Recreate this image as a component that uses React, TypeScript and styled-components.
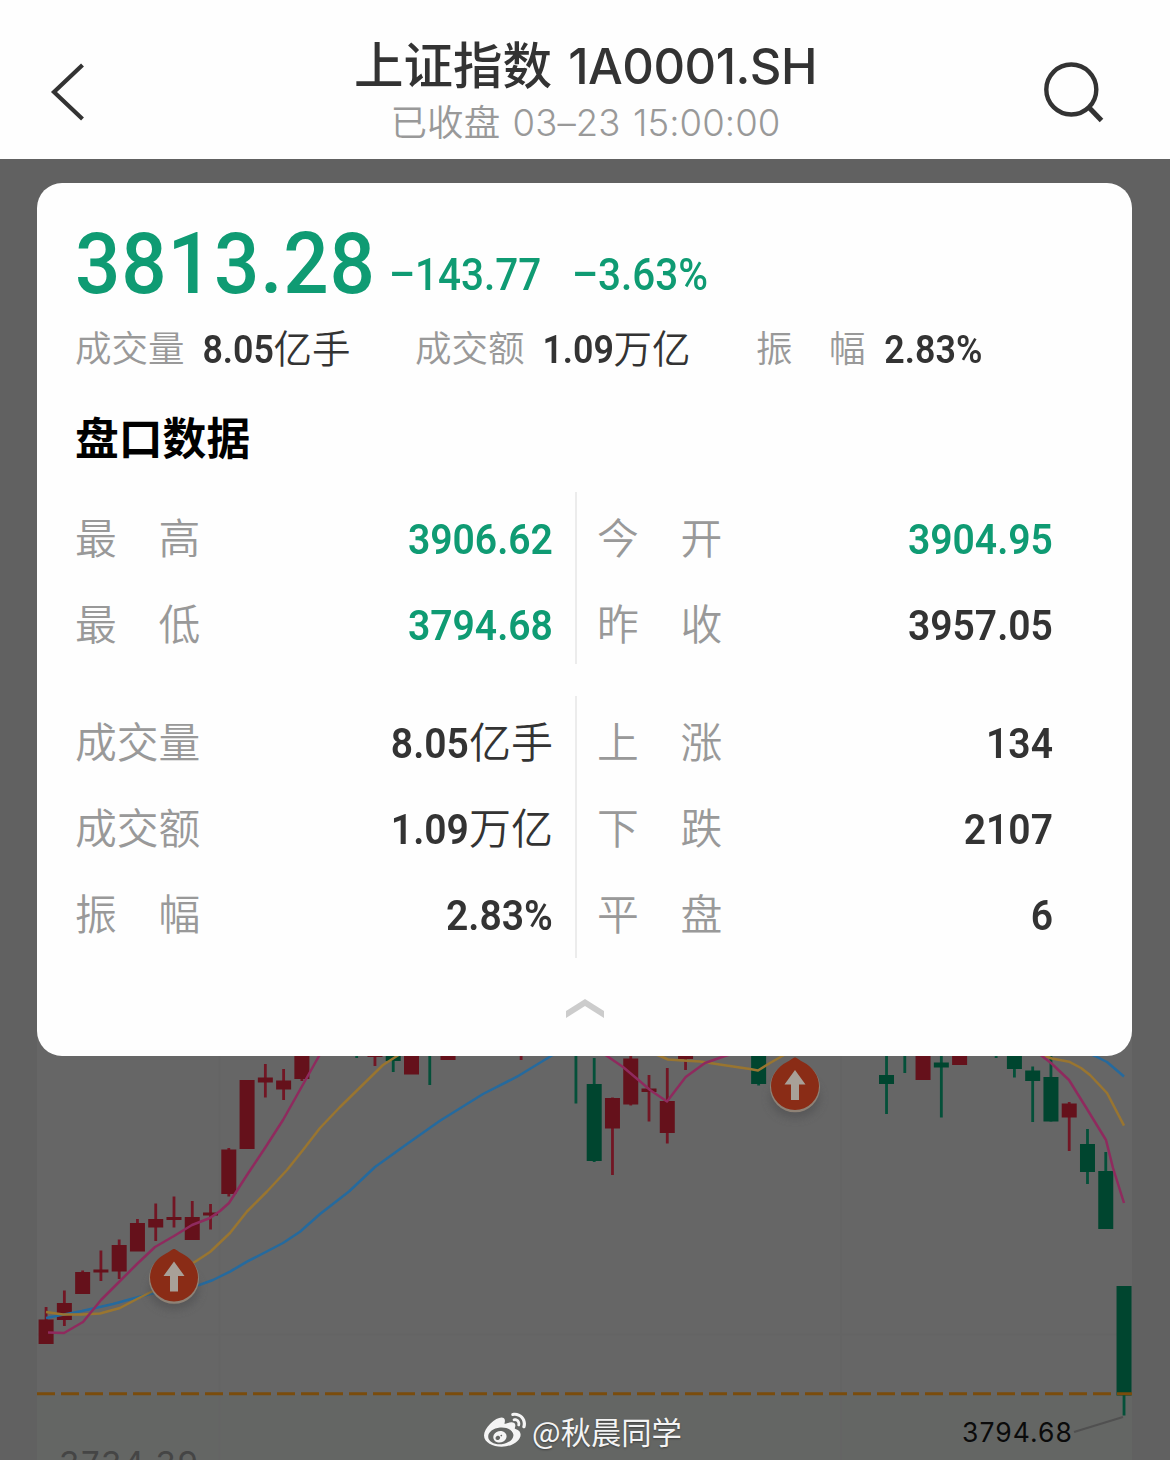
import React from "react";
import styled, { createGlobalStyle } from "styled-components";
import { FaWeibo } from "react-icons/fa";

const GREEN = "#0f9b73";
const INK = "#333333";
const MUTED = "#999999";

const GlobalStyle = createGlobalStyle`
  * { box-sizing: border-box; }
  body {
    margin: 0;
    background: #616161;
    font-family: Inter, "Noto Sans CJK SC", sans-serif;
  }
`;

const Screen = styled.div`
  position: relative;
  width: 1170px;
  height: 1460px;
  overflow: hidden;
  display: flex;
  flex-direction: column;
  background: #616161;
`;

const Header = styled.header`
  flex: none;
  height: 159px;
  padding: 36px 64px 0 49px;
  display: flex;
  justify-content: space-between;
  background: #fefefe;
`;

const HeaderIcon = styled.svg`
  display: block;
  flex: none;
  width: 64px;
  height: 64px;
  margin-top: 24px;
  fill: none;
  stroke: ${INK};
`;

const Titles = styled.div`
  display: flex;
  flex-direction: column;
  align-items: center;
  margin-left: 16px;
  white-space: nowrap;
`;

const Title = styled.h1`
  margin: 0;
  height: 60px;
  line-height: 60px;
  font-size: 49.5px;
  font-weight: 500;
  color: ${INK};
`;

const Code = styled.span`
  margin-left: 3px;
  font-size: 49px;
  font-weight: 550;
  letter-spacing: -0.5px;
`;

const Subtitle = styled.div`
  height: 54px;
  line-height: 54px;
  font-size: 36.5px;
  font-weight: 350;
  letter-spacing: 0.1px;
  word-spacing: 2px;
  color: ${MUTED};
`;

const Card = styled.section`
  position: relative;
  z-index: 1;
  flex: none;
  height: 873px;
  margin: 24px 38px 0 37px;
  padding: 40px 79px 0 38px;
  border-radius: 25px;
  background: #fefefe;
  display: flex;
  flex-direction: column;
`;

/* Figures are set slightly narrow, in the manner of a DIN face. */
const NARROW = "scaleX(0.93)";

const PriceLine = styled.div`
  height: 80px;
  display: flex;
  align-items: flex-start;
  font-family: Roboto, sans-serif;
  font-weight: 500;
  color: ${GREEN};
  white-space: nowrap;
`;

const Price = styled.span`
  width: 314px;
  line-height: 81px;
  font-size: 86px;
  letter-spacing: 0.9px;
  transform: ${NARROW};
  transform-origin: left;
`;

const Change = styled.span<{ $width: number }>`
  width: ${(p) => p.$width}px;
  line-height: 106px;
  font-size: 43.5px;
  transform: ${NARROW};
  transform-origin: left;
`;

const SummaryLine = styled.div`
  height: 54px;
  margin-top: 19px;
  display: flex;
  line-height: 55px;
  white-space: nowrap;
`;

const SummaryItem = styled.div<{ $width: number; $gap: number }>`
  width: ${(p) => p.$width}px;
  display: flex;
  gap: ${(p) => p.$gap}px;
`;

const Label = styled.span<{ $size: number; $line: number }>`
  font-family: "Noto Sans CJK SC", sans-serif;
  font-size: ${(p) => p.$size}px;
  line-height: ${(p) => p.$line}px;
  font-weight: 350;
  color: ${MUTED};
`;

const Value = styled.span<{ $size: number; $down?: boolean }>`
  font-size: ${(p) => p.$size}px;
  color: ${(p) => (p.$down ? GREEN : INK)};
`;

const Digits = styled.span`
  display: inline-block;
  font-family: Roboto, sans-serif;
  font-weight: 600;
  transform: ${NARROW};
  transform-origin: right;
`;

const Unit = styled.span<{ $size: number }>`
  font-family: "Noto Sans CJK SC", sans-serif;
  font-size: ${(p) => p.$size}px;
  font-weight: 350;
  line-height: 0;
`;

const SectionTitle = styled.h2`
  margin: 34px 0 0;
  height: 60px;
  line-height: 52px;
  font-family: "Noto Sans CJK SC", sans-serif;
  font-size: 43.8px;
  font-weight: 600;
  color: #000;
`;

const Group = styled.div<{ $top: number; $height: number }>`
  margin-top: ${(p) => p.$top}px;
  height: ${(p) => p.$height}px;
  display: grid;
  grid-template-columns: 502px 1fr;
  grid-template-rows: 100%;
`;

const Column = styled.div<{ $divided?: boolean }>`
  display: flex;
  flex-direction: column;
  padding: 4px 0 0;
  ${(p) => (p.$divided ? "border-right: 2px solid #ececec; padding-right: 22px;" : "padding-left: 20px;")}
`;

const Row = styled.div`
  flex: none;
  height: 86px;
  display: flex;
  justify-content: space-between;
  line-height: 86px;
  white-space: nowrap;
`;

const Collapse = styled.svg`
  display: block;
  width: 40px;
  height: 20px;
  margin: 41px 0 0 490px;
`;

const Chart = styled.svg`
  display: block;
  flex: none;
  width: 1170px;
  height: 440px;
  margin-top: -36px;
`;

const Watermark = styled.div`
  position: absolute;
  left: 484px;
  top: 1408px;
  height: 46px;
  display: flex;
  align-items: center;
  gap: 6px;
  font-family: "Noto Sans CJK SC", sans-serif;
  font-size: 30.3px;
  line-height: 46px;
  color: #f4f4f4;
  white-space: nowrap;
  text-shadow: 0 1px 2px rgba(0, 0, 0, 0.4);
`;

function Quote({ text, size, down }: { text: string; size: number; down?: boolean }) {
  const parts = text.match(/^([\d.%]+)(.*)$/)!;
  return (
    <Value $size={size} $down={down}>
      <Digits>{parts[1]}</Digits>
      {parts[2] && <Unit $size={size}>{parts[2]}</Unit>}
    </Value>
  );
}

type Entry = [label: string, value: string, down?: boolean];

function Entries({ items, divided }: { items: Entry[]; divided?: boolean }) {
  return (
    <Column $divided={divided}>
      {items.map(([label, value, down]) => (
        <Row key={label}>
          <Label $size={41.8} $line={80}>{label}</Label>
          <Quote text={value} size={42} down={down} />
        </Row>
      ))}
    </Column>
  );
}

/* [slot, rising, body top, body bottom, wick top, wick bottom] */
const CANDLES: [number, boolean, number, number, number, number][] = [
  [0, true, 1319.5, 1344, 1307, 1344],
  [1, true, 1303, 1320, 1290.5, 1326],
  [2, true, 1272, 1294, 1270.5, 1294],
  [3, true, 1269.5, 1272.5, 1250.5, 1281],
  [4, true, 1245, 1271.5, 1239.5, 1279],
  [5, true, 1223, 1251.5, 1219, 1251],
  [6, true, 1219, 1227.5, 1203.5, 1241],
  [7, true, 1217, 1220, 1196.5, 1227.5],
  [8, true, 1217, 1240, 1201, 1240],
  [9, true, 1212.5, 1215.5, 1204, 1229.5],
  [10, true, 1149.5, 1194, 1148, 1196.5],
  [11, true, 1080, 1149, 1080, 1149],
  [12, true, 1077.5, 1082.5, 1064, 1097.5],
  [13, true, 1080.5, 1089.5, 1069, 1100],
  [14, true, 1040, 1079, 1040, 1081],
  [17, false, 1040, 1050, 1040, 1058],
  [18, true, 1040, 1057, 1040, 1066],
  [19, false, 1040, 1061, 1040, 1072],
  [20, true, 1040, 1074.5, 1040, 1074],
  [21, false, 1040, 1050, 1040, 1085],
  [22, true, 1040, 1060, 1040, 1060],
  [26, true, 1040, 1050, 1040, 1060],
  [29, false, 1040, 1050, 1040, 1103.5],
  [30, false, 1084, 1161, 1058, 1162],
  [31, true, 1098, 1128.5, 1097.5, 1175],
  [32, true, 1058.5, 1104.5, 1040, 1105.5],
  [33, true, 1088.5, 1092, 1075, 1121.5],
  [34, true, 1101, 1133, 1068, 1143.5],
  [35, true, 1040, 1059, 1040, 1070],
  [39, false, 1040, 1084, 1040, 1085.5],
  [46, false, 1075, 1084, 1040, 1114],
  [47, false, 1040, 1050, 1040, 1073],
  [48, true, 1040, 1080, 1040, 1080],
  [49, false, 1062.5, 1067.5, 1040, 1117.5],
  [50, true, 1040, 1065, 1040, 1065],
  [52, false, 1040, 1050, 1040, 1058],
  [53, false, 1040, 1069, 1040, 1077.5],
  [54, false, 1070.5, 1081, 1066.5, 1122],
  [55, false, 1077, 1121.5, 1040, 1121.5],
  [56, true, 1103.5, 1117.5, 1102, 1151],
  [57, false, 1144, 1172, 1129, 1184],
  [58, false, 1171, 1229, 1152, 1229],
  [59, false, 1286, 1395.5, 1286, 1415.5],
];

const BLUE = "#256a9e";
const AMBER = "#997530";
const PINK = "#8f2a5e";

const AVERAGES: { color: string; points: string }[] = [
  { color: BLUE, points: "46,1318 64,1314.5 82,1311 113,1304 133,1298.5 150,1294 175,1290 200,1284.7 213,1280 230,1271.7 247,1261.7 283,1243 300,1231.7 320,1214 349,1191.5 375,1167 407,1144 440,1120.7 483,1094 517,1076.7 551,1056 565,1047" },
  { color: BLUE, points: "1080,1049 1095,1056 1107,1062 1124,1076.5" },
  { color: AMBER, points: "46,1312 63,1314.5 82,1314.5 100,1313.5 120,1308 137,1299 155,1290 180,1271 197,1260.5 210,1252 230,1233 247,1211.5 267,1191.5 287,1170 303,1150 320,1128 340,1107 383,1065 397,1056 408,1048" },
  { color: AMBER, points: "650,1052 660,1056 668,1059.5 683,1060.5 700,1061.5 723,1065 750,1069 758,1070.5 770,1063 784,1055 795,1049" },
  { color: AMBER, points: "1035,1052 1052,1058.5 1069,1061.7 1081,1068 1090,1075 1107,1093 1124,1125.7" },
  { color: PINK, points: "48,1332.5 64,1333 83,1322 101,1300 119,1282 137,1264 155,1247 174,1236 192,1225 210,1218 220,1211 229,1203 247,1175 265,1148 283,1120 301,1088 319,1056 324,1048" },
  { color: PINK, points: "597,1049 607,1056 623,1067 642,1083 650,1090 667,1101.5 685.7,1077 705,1063 725,1056 740,1051" },
  { color: PINK, points: "1033,1050 1042,1056 1051,1063 1069,1080 1087,1109 1106,1140 1113,1168 1124,1203" },
];

function SignalPin({ x, y }: { x: number; y: number }) {
  return (
    <g transform={`translate(${x} ${y})`}>
      <ellipse cx="0" cy="12" rx="25" ry="20" fill="#4b4b4e" filter="url(#soft)" opacity="0.55" />
      <circle cx="0" cy="1.3" r="25" fill="#8e8276" />
      <path d="M0 -28.5 C2 -28.5 4 -26 8 -24 C18 -19 24 -10 24 0 A24 24 0 0 1 -24 0 C-24 -10 -18 -19 -8 -24 C-4 -26 -2 -28.5 0 -28.5Z" fill="#8a2c16" />
      <path d="M0 -16 L10.5 -1.5 H4 V14 H-4 V-1.5 H-10.5Z" fill="#a8a098" />
    </g>
  );
}

function KLine() {
  return (
    <Chart viewBox="0 1020 1170 440">
      <defs>
        <filter id="soft" x="-50%" y="-50%" width="200%" height="200%">
          <feGaussianBlur stdDeviation="4" />
        </filter>
      </defs>
      <rect x="37" y="1020" width="1095" height="440" fill="#666666" />
      <rect x="37" y="1395" width="1095" height="65" fill="#646664" />
      <g stroke="#646464" strokeWidth="1.5">
        <path d="M219.5 1020V1460M841 1020V1460M37 1334.5H1132" />
      </g>
      {CANDLES.map(([slot, rising, top, bottom, high, low]) => {
        const x = 46.1 + slot * 18.27;
        return (
          <g key={slot} fill={rising ? "#65111b" : "#00452f"}>
            <rect x={x - 1.4} y={high} width="2.8" height={low - high} fill={rising ? "#721624" : "#045039"} />
            <rect x={x - 7.5} y={top} width="15" height={bottom - top} />
          </g>
        );
      })}
      {AVERAGES.map(({ color, points }) => (
        <polyline key={points} points={points} fill="none" stroke={color} strokeWidth="2.5" strokeLinejoin="round" />
      ))}
      <path d="M37 1393.7H1132" stroke="#7a4c0c" strokeWidth="3" strokeDasharray="18 6" />
      <SignalPin x={174} y={1277.5} />
      <SignalPin x={795} y={1086} />
      <path d="M1074 1432L1123 1417" stroke="#505050" strokeWidth="2" />
      <text x="962" y="1442" fontFamily="Inter, sans-serif" fontSize="26.5" fill="#0b0b0b" textLength="110">3794.68</text>
      <text x="59" y="1475" fontFamily="Inter, sans-serif" fontSize="33" fill="#454545" textLength="139">3734.39</text>
    </Chart>
  );
}

export default function App() {
  return (
    <>
      <GlobalStyle />
      <Screen>
        <Header>
          <HeaderIcon viewBox="0 0 64 64" strokeWidth="4.2">
            <path d="M33.500 5L5 32L33.500 59" />
          </HeaderIcon>
          <Titles>
            <Title>
              上证指数 <Code>1A0001.SH</Code>
            </Title>
            <Subtitle>已收盘 03–23 15:00:00</Subtitle>
          </Titles>
          <HeaderIcon viewBox="0 0 64 64" strokeWidth="4.4">
            <circle cx="29.3" cy="29.5" r="25" />
            <path d="M47 47.500L59.500 60.500" strokeWidth="5" />
          </HeaderIcon>
        </Header>
        <Card>
          <PriceLine>
            <Price>3813.28</Price>
            <Change $width={183}>–143.77</Change>
            <Change $width={160}>–3.63%</Change>
          </PriceLine>
          <SummaryLine>
            <SummaryItem $width={340} $gap={12}>
              <Label $size={36.5} $line={50}>成交量</Label>
              <Quote text="8.05亿手" size={38.5} />
            </SummaryItem>
            <SummaryItem $width={341} $gap={12}>
              <Label $size={36.5} $line={50}>成交额</Label>
              <Quote text="1.09万亿" size={38.5} />
            </SummaryItem>
            <SummaryItem $width={260} $gap={11}>
              <Label $size={36.5} $line={50}>振　幅</Label>
              <Quote text="2.83%" size={38.5} />
            </SummaryItem>
          </SummaryLine>
          <SectionTitle>盘口数据</SectionTitle>
          <Group $top={22} $height={172}>
            <Entries divided items={[["最　高", "3906.62", true], ["最　低", "3794.68", true]]} />
            <Entries items={[["今　开", "3904.95", true], ["昨　收", "3957.05"]]} />
          </Group>
          <Group $top={32} $height={262}>
            <Entries divided items={[["成交量", "8.05亿手"], ["成交额", "1.09万亿"], ["振　幅", "2.83%"]]} />
            <Entries items={[["上　涨", "134"], ["下　跌", "2107"], ["平　盘", "6"]]} />
          </Group>
          <Collapse viewBox="0 0 40 20">
            <path d="M1 12L20 0L39 12V19L20 7L1 19Z" fill="#cccccc" />
          </Collapse>
        </Card>
        <KLine />
        <Watermark>
          <FaWeibo size={42} />
          @秋晨同学
        </Watermark>
      </Screen>
    </>
  );
}
